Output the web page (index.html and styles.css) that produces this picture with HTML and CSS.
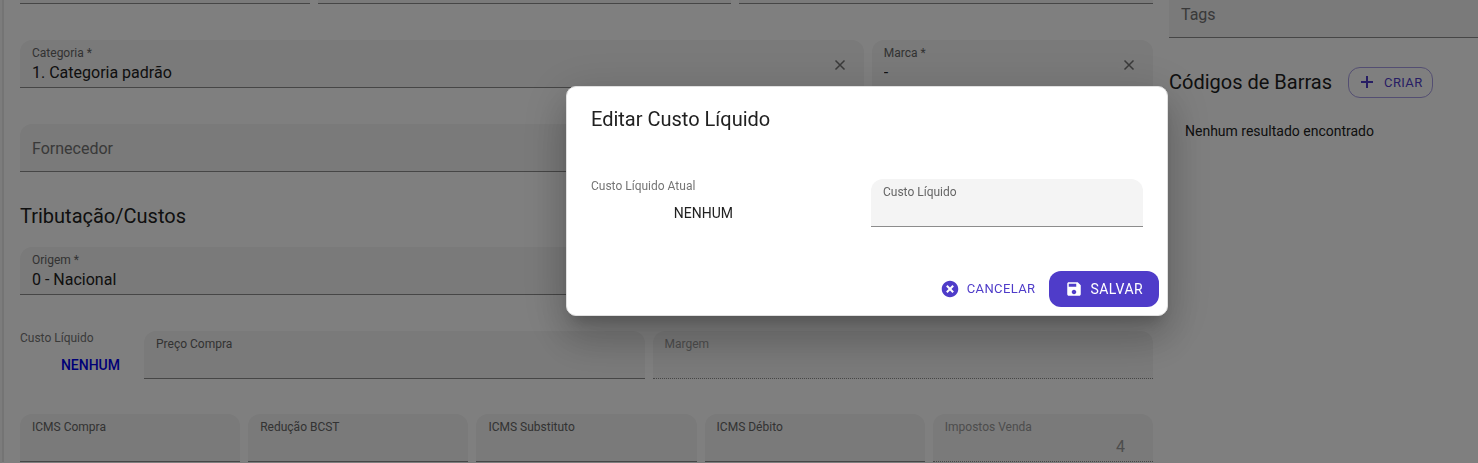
FILE: index.html
```
<!DOCTYPE html>
<html lang="pt-BR">
<head>
<meta charset="utf-8">
<meta name="viewport" content="width=device-width, initial-scale=1">
<title>Editar Custo Líquido</title>
<link rel="stylesheet" href="styles.css">
</head>
<body>
<div class="page">
  <form class="product">
    <div class="row row--codes">
      <div class="field"><input class="field__input" type="text" aria-label="Código"></div>
      <div class="field"><input class="field__input" type="text" aria-label="Nome"></div>
      <div class="field"><input class="field__input" type="text" aria-label="Descrição"></div>
    </div>
    <div class="row row--category">
      <div class="field field--clearable">
        <label class="field__label" for="categoria">Categoria *</label>
        <input class="field__input" id="categoria" type="text" value="1. Categoria padrão">
        <button class="field__clear" type="button" aria-label="Limpar categoria">
          <svg class="icon-clear" viewBox="0 0 12 12"><path d="M1.5 1.5l9 9M10.5 1.5l-9 9"/></svg>
        </button>
      </div>
      <div class="field field--clearable">
        <label class="field__label" for="marca">Marca *</label>
        <input class="field__input" id="marca" type="text" value="-">
        <button class="field__clear" type="button" aria-label="Limpar marca">
          <svg class="icon-clear" viewBox="0 0 12 12"><path d="M1.5 1.5l9 9M10.5 1.5l-9 9"/></svg>
        </button>
      </div>
    </div>
    <div class="field field--empty">
      <input class="field__input" type="text" placeholder="Fornecedor" aria-label="Fornecedor">
    </div>
    <section class="section">
      <h2 class="heading">Tributação/Custos</h2>
      <div class="field">
        <label class="field__label" for="origem">Origem *</label>
        <input class="field__input" id="origem" type="text" value="0 - Nacional">
      </div>
    </section>
    <div class="row row--cost">
      <div class="readout">
        <span class="readout__label">Custo Líquido</span>
        <a class="readout__value readout__value--link" href="#custo">NENHUM</a>
      </div>
      <div class="field">
        <label class="field__label" for="preco">Preço Compra</label>
        <input class="field__input" id="preco" type="text">
      </div>
      <div class="field field--disabled">
        <label class="field__label" for="margem">Margem</label>
        <input class="field__input" id="margem" type="text" disabled>
      </div>
    </div>
    <div class="row row--taxes">
      <div class="field">
        <label class="field__label" for="icms-compra">ICMS Compra</label>
        <input class="field__input" id="icms-compra" type="text">
      </div>
      <div class="field">
        <label class="field__label" for="bcst">Redução BCST</label>
        <input class="field__input" id="bcst" type="text">
      </div>
      <div class="field">
        <label class="field__label" for="icms-sub">ICMS Substituto</label>
        <input class="field__input" id="icms-sub" type="text">
      </div>
      <div class="field">
        <label class="field__label" for="icms-deb">ICMS Débito</label>
        <input class="field__input" id="icms-deb" type="text">
      </div>
      <div class="field field--disabled">
        <label class="field__label" for="impostos">Impostos Venda</label>
        <input class="field__input field__input--number" id="impostos" type="text" value="4" disabled>
      </div>
    </div>
  </form>
  <aside class="side">
    <div class="field field--empty">
      <input class="field__input" type="text" placeholder="Tags" aria-label="Tags">
    </div>
    <div class="barcodes">
      <h2 class="heading">Códigos de Barras</h2>
      <button class="button button--outlined" type="button">
        <svg class="icon icon--plus" viewBox="0 0 18 18"><path d="M9 3v12M3 9h12"/></svg>
        CRIAR
      </button>
    </div>
    <p class="side__empty">Nenhum resultado encontrado</p>
  </aside>
</div>

<div class="backdrop">
  <form class="dialog" role="dialog" aria-modal="true" aria-labelledby="dialog-title">
    <h2 class="heading dialog__title" id="dialog-title">Editar Custo Líquido</h2>
    <div class="dialog__content">
      <div class="readout readout--dialog">
        <span class="readout__label">Custo Líquido Atual</span>
        <span class="readout__value">NENHUM</span>
      </div>
      <div class="field">
        <label class="field__label" for="custo">Custo Líquido</label>
        <input class="field__input" id="custo" type="text">
      </div>
    </div>
    <div class="dialog__actions">
      <button class="button" type="button">
        <svg class="icon" viewBox="0 0 24 24"><path d="M12 1C5.900 1 1 5.900 1 12s4.900 11 11 11 11-4.900 11-11S18.100 1 12 1zm5.200 14.300l-1.900 1.900L12 13.900l-3.300 3.300-1.900-1.900L10.100 12 6.800 8.700l1.900-1.900L12 10.100l3.300-3.300 1.900 1.900L13.900 12z"/></svg>
        CANCELAR
      </button>
      <button class="button button--primary" type="submit">
        <svg class="icon" viewBox="0 0 24 24"><path d="M17 3H5c-1.110 0-2 .9-2 2v14c0 1.100.89 2 2 2h14c1.100 0 2-.9 2-2V7l-4-4zm-5 16c-1.660 0-3-1.340-3-3s1.340-3 3-3 3 1.340 3 3-1.340 3-3 3zm3-10H5V5h10v4z"/></svg>
        SALVAR
      </button>
    </div>
  </form>
</div>
</body>
</html>
```
FILE: styles.css
```
* { box-sizing: border-box; }

body {
  margin: 0;
  height: 100vh;
  overflow: hidden;
  border-left: 2px solid #f8f8f8;
  font-family: Roboto, "Liberation Sans", sans-serif;
  font-size: 14px;
  line-height: 20px;
  color: #212121;
  background: #fff;
}

/* The form is scrolled so its first row is cut by the window top. */
.page {
  display: grid;
  grid-template-columns: 11fr 3fr;
  gap: 16px;
  margin-top: -44px;
  padding-left: 16px;
  border-left: 2px solid #e8e8e8;
}

.product {
  display: flex;
  flex-direction: column;
  gap: 36px;
  min-width: 0;
}

.row { display: grid; gap: 8px; }
.row--codes { grid-template-columns: 7fr 10fr 10fr; }
.row--category { grid-template-columns: 3fr 1fr; }
.row--cost { grid-template-columns: 116px 1fr 1fr; }

.row--taxes {
  grid-template-columns: repeat(5, 1fr);
  margin-top: -1px;
}

.section {
  display: flex;
  flex-direction: column;
  gap: 15px;
  margin-top: -8px;
}

.heading {
  margin: 0;
  font-size: 20px;
  font-weight: 400;
  line-height: 32px;
}

.field {
  display: grid;
  grid-template-rows: 15px 23px;
  height: 48px;
  min-width: 0;
  padding: 6px 12px 3px;
  background: #f4f4f4;
  border-bottom: 1px solid #8c8c8c;
  border-radius: 12px 12px 0 0;
}

.field--empty {
  grid-template-rows: 1fr;
  padding: 5px 12px 4px;
}

.field--clearable {
  grid-template-columns: 1fr 24px;
}

.field--disabled {
  color: #9a9a9a;
  border-bottom-style: dotted;
}

.field__label {
  font-size: 12px;
  line-height: 15px;
  color: #666;
}

.field--disabled .field__label { color: #9a9a9a; }

.field__input {
  grid-column: 1;
  width: 100%;
  min-width: 0;
  padding: 0;
  border: 0;
  outline: 0;
  background: none;
  font: inherit;
  font-size: 16px;
  line-height: 23px;
  color: #212121;
}

.field__input:disabled { color: #9a9a9a; }
.field__input::placeholder { color: #737373; opacity: 1; }

.field__input--number {
  padding-right: 16px;
  text-align: right;
}

.field__clear {
  grid-column: 2;
  grid-row: 1 / 3;
  display: grid;
  place-items: center;
  padding: 0;
  border: 0;
  background: none;
}

.icon-clear {
  width: 12px;
  height: 12px;
  fill: none;
  stroke: #757575;
  stroke-width: 1.5;
}

.readout {
  display: flex;
  flex-direction: column;
  gap: 10px;
}

.readout__label {
  font-size: 12px;
  line-height: 14px;
  color: #757575;
}

.readout__value {
  padding-right: 16px;
  text-align: right;
  text-decoration: none;
}

.readout__value--link {
  font-weight: 500;
  color: #0000ee;
}

.readout--dialog { width: 158px; }

.side {
  min-width: 0;
  padding-top: 34px;
}

.side .field { border-top-right-radius: 0; }

.barcodes {
  display: flex;
  align-items: center;
  gap: 16px;
  margin-top: 28px;
}

.side__empty {
  margin: 23px 16px;
}

.button {
  display: inline-flex;
  align-items: center;
  gap: 8px;
  padding: 4px 6px;
  border: 1px solid transparent;
  border-radius: 12px;
  background: none;
  font-family: inherit;
  font-size: 13px;
  line-height: 22px;
  letter-spacing: 0.03em;
  color: #4f3cc9;
}

.button--outlined {
  padding: 4px 9px;
  border-color: #a79de4;
  line-height: 21px;
}

.button--primary {
  padding: 6px 15px;
  font-size: 14px;
  color: #fff;
  background: #4f3cc9;
}

.icon {
  width: 18px;
  height: 18px;
  fill: currentColor;
}

.icon--plus {
  fill: none;
  stroke: currentColor;
  stroke-width: 2;
}

.backdrop {
  position: fixed;
  inset: 0;
  display: grid;
  place-items: center;
  padding: 0 0 61px 256px;
  background: rgba(0, 0, 0, 0.5);
}

.dialog {
  width: 100%;
  max-width: 602px;
  background: #fff;
  border: 1px solid #e0e0e0;
  border-radius: 10px;
  box-shadow:
    0 11px 15px -7px rgba(0, 0, 0, 0.2),
    0 24px 38px 3px rgba(0, 0, 0, 0.14),
    0 9px 46px 8px rgba(0, 0, 0, 0.12);
}

.dialog__title { padding: 16px 24px; }

.dialog__content {
  display: grid;
  grid-template-columns: 1fr 1fr;
  gap: 8px;
  padding: 28px 24px 36px;
}

.dialog__actions {
  display: flex;
  align-items: center;
  justify-content: flex-end;
  gap: 6px;
  padding: 8px;
}
```
